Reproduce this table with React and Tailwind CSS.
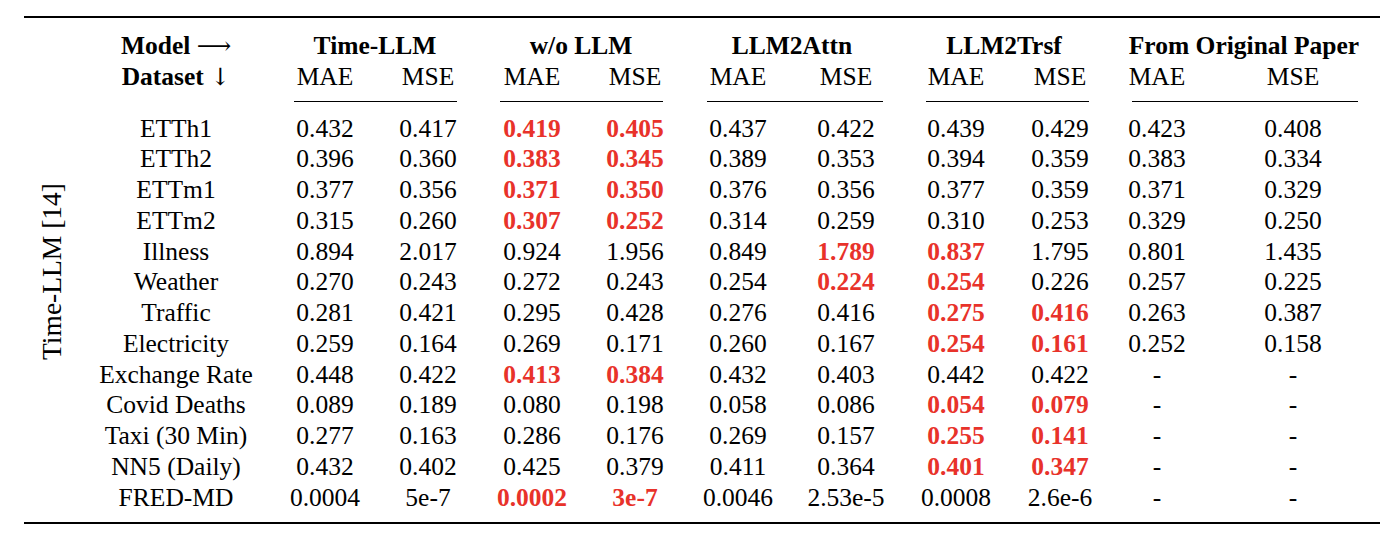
import React from "react";

const rows = [
  ["ETTh1", ["0.432", "0.417", "0.419*", "0.405*", "0.437", "0.422", "0.439", "0.429", "0.423", "0.408"]],
  ["ETTh2", ["0.396", "0.360", "0.383*", "0.345*", "0.389", "0.353", "0.394", "0.359", "0.383", "0.334"]],
  ["ETTm1", ["0.377", "0.356", "0.371*", "0.350*", "0.376", "0.356", "0.377", "0.359", "0.371", "0.329"]],
  ["ETTm2", ["0.315", "0.260", "0.307*", "0.252*", "0.314", "0.259", "0.310", "0.253", "0.329", "0.250"]],
  ["Illness", ["0.894", "2.017", "0.924", "1.956", "0.849", "1.789*", "0.837*", "1.795", "0.801", "1.435"]],
  ["Weather", ["0.270", "0.243", "0.272", "0.243", "0.254", "0.224*", "0.254*", "0.226", "0.257", "0.225"]],
  ["Traffic", ["0.281", "0.421", "0.295", "0.428", "0.276", "0.416", "0.275*", "0.416*", "0.263", "0.387"]],
  ["Electricity", ["0.259", "0.164", "0.269", "0.171", "0.260", "0.167", "0.254*", "0.161*", "0.252", "0.158"]],
  ["Exchange Rate", ["0.448", "0.422", "0.413*", "0.384*", "0.432", "0.403", "0.442", "0.422", "-", "-"]],
  ["Covid Deaths", ["0.089", "0.189", "0.080", "0.198", "0.058", "0.086", "0.054*", "0.079*", "-", "-"]],
  ["Taxi (30 Min)", ["0.277", "0.163", "0.286", "0.176", "0.269", "0.157", "0.255*", "0.141*", "-", "-"]],
  ["NN5 (Daily)", ["0.432", "0.402", "0.425", "0.379", "0.411", "0.364", "0.401*", "0.347*", "-", "-"]],
  ["FRED-MD", ["0.0004", "5e-7", "0.0002*", "3e-7*", "0.0046", "2.53e-5", "0.0008", "2.6e-6", "-", "-"]],
];

const groups = [
  { name: "Time-LLM", rule: "ml-[22px] mr-[21px]" },
  { name: "w/o LLM", rule: "ml-[22px] mr-[21px]" },
  { name: "LLM2Attn", rule: "ml-[23px] mr-[17px]" },
  { name: "LLM2Trsf", rule: "ml-[26px] mr-[19px]" },
  { name: "From Original Paper", rule: "ml-[24px] mr-[22px]" },
];

function Cell({ v }) {
  const best = v.endsWith("*");
  const text = best ? v.slice(0, -1) : v;
  return (
    <div
      className={
        "text-center whitespace-nowrap leading-[30.75px] h-[30.75px] " +
        (best ? "font-bold text-[#e8322a]" : "text-black")
      }
    >
      {text}
    </div>
  );
}

export default function App() {
  return (
    <div className="w-[1392px] h-[536px] bg-white overflow-hidden font-['Liberation_Serif','Times_New_Roman',serif] text-[25.5px] text-black">
      <div className="ml-[24px] w-[1356px] pt-[16px]">
        <div className="h-[2px] bg-black" />
        <div className="flex pt-[12px]">
          <div className="w-[56px] flex items-center justify-center">
            <span className="[writing-mode:vertical-rl] rotate-180 whitespace-nowrap leading-none text-[27.5px]">
              Time-LLM [14]
            </span>
          </div>
          <div className="grid grid-cols-[192px_106px_100px_108px_98px_108px_108px_112px_96px_98px_174px]">
            <div className="text-center font-bold leading-[31px] h-[31px] whitespace-nowrap">
              Model{" "}
              <span className="font-normal font-['DejaVu_Serif',serif] text-[24px]">⟶</span>
            </div>
            {groups.map((g) => (
              <div
                key={g.name}
                className="col-span-2 text-center font-bold leading-[31px] h-[31px] whitespace-nowrap"
              >
                {g.name}
              </div>
            ))}
            <div className="text-center font-bold leading-[31px] h-[31px] whitespace-nowrap">
              Dataset{" "}
              <span className="font-normal font-['DejaVu_Serif',serif] text-[24px]">↓</span>
            </div>
            {groups.map((g) => (
              <React.Fragment key={g.name + "-sub"}>
                <div className="text-center leading-[31px] h-[31px]">MAE</div>
                <div className="text-center leading-[31px] h-[31px]">MSE</div>
              </React.Fragment>
            ))}
            <div className="h-[21.5px]" />
            {groups.map((g) => (
              <div key={g.name + "-rule"} className="col-span-2 pt-[9px]">
                <div className={"h-px bg-black " + g.rule} />
              </div>
            ))}
            {rows.map(([name, vals]) => (
              <React.Fragment key={name}>
                <div className="text-center whitespace-nowrap leading-[30.75px] h-[30.75px]">{name}</div>
                {vals.map((v, i) => (
                  <Cell key={i} v={v} />
                ))}
              </React.Fragment>
            ))}
          </div>
        </div>
        <div className="mt-[9px] h-[2px] bg-black" />
      </div>
    </div>
  );
}
